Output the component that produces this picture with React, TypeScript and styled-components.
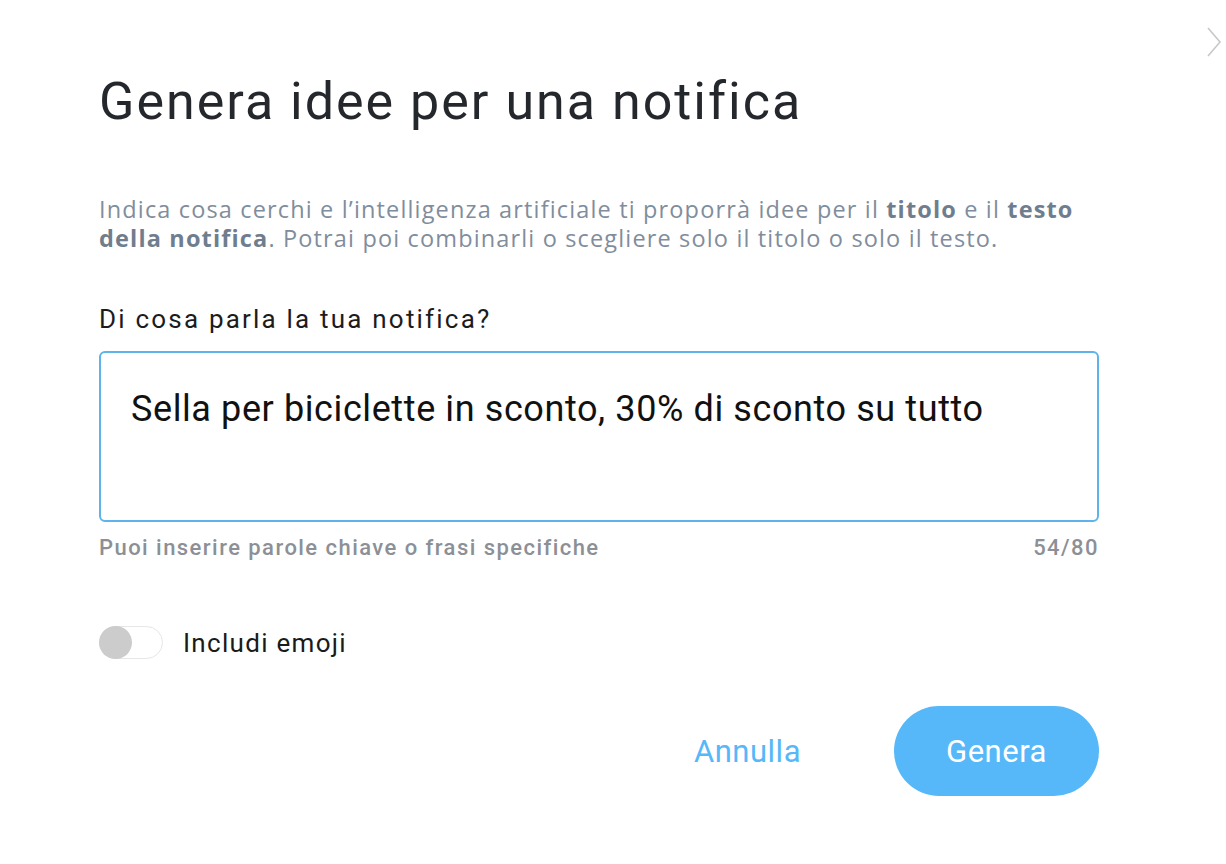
import React, { useState } from "react";
import styled, { createGlobalStyle } from "styled-components";

const Global = createGlobalStyle`
  html, body { margin: 0; padding: 0; background: #fff; }
  body { font-family: Roboto, "Liberation Sans", sans-serif; }
  * { box-sizing: border-box; }
`;

const Page = styled.div`
  position: relative;
  width: 1226px;
  height: 864px;
  background: #fff;
  padding: 70px 0 0 99px;
`;

const Dialog = styled.div`
  width: 1000px;
  display: flex;
  flex-direction: column;
`;

const Title = styled.h1`
  margin: 0;
  font-family: Roboto, sans-serif;
  font-weight: 400;
  font-size: 52px;
  line-height: 64px;
  letter-spacing: 2px;
  color: #24272c;
`;

const Description = styled.p`
  margin: 61px 0 0;
  font-family: "Open Sans", "Noto Sans", sans-serif;
  font-size: 23.5px;
  line-height: 29px;
  color: #7f8d9c;
  letter-spacing: 1.15px;
  white-space: nowrap;
  b { font-weight: 700; color: #6f7e8e; }
`;

const Label = styled.label`
  margin-top: 50px;
  font-size: 26px;
  line-height: 32px;
  color: #1c1c1e;
  letter-spacing: 2.2px;
`;

const TextBox = styled.textarea`
  margin-top: 16px;
  width: 1000px;
  height: 171px;
  border: 2px solid #5db3ea;
  border-radius: 6px;
  padding: 36px 30px;
  font-family: Roboto, sans-serif;
  font-size: 36px;
  line-height: 40px;
  letter-spacing: 0.6px;
  color: #111;
  resize: none;
  outline: none;
`;

const HelperRow = styled.div`
  margin-top: 13px;
  display: flex;
  justify-content: space-between;
  font-size: 22px;
  font-weight: 500;
  line-height: 26px;
  color: #8c9096;
  letter-spacing: 1.45px;
`;

const ToggleRow = styled.div`
  margin-top: 65px;
  display: flex;
  align-items: center;
  gap: 20px;
`;

const Track = styled.button`
  position: relative;
  width: 64px;
  height: 33px;
  border-radius: 17px;
  border: 1.5px solid #e6e6e6;
  background: #fff;
  padding: 0;
  cursor: pointer;
`;

const Knob = styled.span<{ $on: boolean }>`
  position: absolute;
  top: -1.5px;
  left: ${(p) => (p.$on ? "30px" : "-1.5px")};
  width: 33px;
  height: 33px;
  border-radius: 50%;
  background: ${(p) => (p.$on ? "#56b8f8" : "#cccccc")};
`;

const ToggleLabel = styled.span`
  font-size: 26px;
  color: #1a1a1a;
  letter-spacing: 1.3px;
`;

const Actions = styled.div`
  margin-top: 47px;
  display: flex;
  justify-content: flex-end;
  align-items: center;
  gap: 93px;
`;

const TextButton = styled.button`
  background: none;
  border: none;
  padding: 0;
  font-family: Roboto, sans-serif;
  font-size: 31px;
  letter-spacing: 0.5px;
  color: #56b8f8;
  cursor: pointer;
`;

const PillButton = styled.button`
  width: 205px;
  height: 90px;
  border-radius: 45px;
  border: none;
  background: #56b8f8;
  color: #fff;
  font-family: Roboto, sans-serif;
  font-size: 31px;
  letter-spacing: 0.5px;
  cursor: pointer;
`;

const Chevron = styled.svg`
  position: absolute;
  top: 26px;
  right: 4px;
`;

export default function App() {
  const [text, setText] = useState("Sella per biciclette in sconto, 30% di sconto su tutto");
  const [emoji, setEmoji] = useState(false);
  return (
    <Page>
      <Global />
      <Chevron width="16" height="32" viewBox="0 0 16 32">
        <path d="M2 2 L14 16 L2 30" fill="none" stroke="#c8c8c8" strokeWidth="1.6" />
      </Chevron>
      <Dialog>
        <Title>Genera idee per una notifica</Title>
        <Description>
          Indica cosa cerchi e l’intelligenza artificiale ti proporrà idee per il <b>titolo</b> e il <b>testo</b>
          <br />
          <b>della notifica</b>. Potrai poi combinarli o scegliere solo il titolo o solo il testo.
        </Description>
        <Label>Di cosa parla la tua notifica?</Label>
        <TextBox value={text} maxLength={80} onChange={(e) => setText(e.target.value)} />
        <HelperRow>
          <span>Puoi inserire parole chiave o frasi specifiche</span>
          <span>{text.length}/80</span>
        </HelperRow>
        <ToggleRow>
          <Track onClick={() => setEmoji(!emoji)}>
            <Knob $on={emoji} />
          </Track>
          <ToggleLabel>Includi emoji</ToggleLabel>
        </ToggleRow>
        <Actions>
          <TextButton>Annulla</TextButton>
          <PillButton>Genera</PillButton>
        </Actions>
      </Dialog>
    </Page>
  );
}
